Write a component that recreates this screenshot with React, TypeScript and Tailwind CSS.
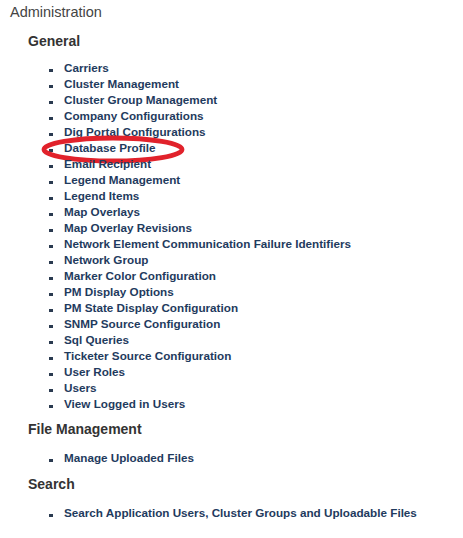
const general = [
  "Carriers",
  "Cluster Management",
  "Cluster Group Management",
  "Company Configurations",
  "Dig Portal Configurations",
  "Database Profile",
  "Email Recipient",
  "Legend Management",
  "Legend Items",
  "Map Overlays",
  "Map Overlay Revisions",
  "Network Element Communication Failure Identifiers",
  "Network Group",
  "Marker Color Configuration",
  "PM Display Options",
  "PM State Display Configuration",
  "SNMP Source Configuration",
  "Sql Queries",
  "Ticketer Source Configuration",
  "User Roles",
  "Users",
  "View Logged in Users",
];

function Item({ label, circled }: { label: string; circled?: boolean }) {
  return (
    <li className="relative flex items-center h-4 leading-4">
      <span className="absolute left-[-15px] top-[8.5px] w-[4px] h-[3.5px] bg-[#2a3a50]" />
      <a className="text-[11.7px] font-bold text-[#1f3b5e] whitespace-nowrap">{label}</a>
      {circled && (
        <svg
          className="absolute left-[-24px] top-[-6px] pointer-events-none"
          width="147"
          height="31"
          viewBox="0 0 147 31"
        >
          <ellipse cx="73" cy="15.5" rx="69" ry="11.5" fill="none" stroke="#e1222b" strokeWidth="4.8" />
        </svg>
      )}
    </li>
  );
}

function Section({ title, items, listGap }: { title: string; items: string[]; listGap: string }) {
  return (
    <section>
      <h3 className="pl-[28px] text-[14px] leading-4 font-bold text-[#333]">{title}</h3>
      <ul className={`pl-[64px] ${listGap}`}>
        {items.map((it) => (
          <Item key={it} label={it} circled={it === "Database Profile"} />
        ))}
      </ul>
    </section>
  );
}

export default function App() {
  return (
    <div className="w-[463px] h-[538px] bg-white font-['Liberation_Sans',Arial,sans-serif] overflow-hidden">
      <h2 className="pt-[4px] pl-[10px] text-[14.5px] leading-[17px] text-[#444]">Administration</h2>
      <div className="mt-[12px]">
        <Section title="General" items={general} listGap="mt-[11px]" />
      </div>
      <div className="mt-[9px]">
        <Section title="File Management" items={["Manage Uploaded Files"]} listGap="mt-[13px]" />
      </div>
      <div className="mt-[10px]">
        <Section
          title="Search"
          items={["Search Application Users, Cluster Groups and Uploadable Files"]}
          listGap="mt-[13px]"
        />
      </div>
    </div>
  );
}
